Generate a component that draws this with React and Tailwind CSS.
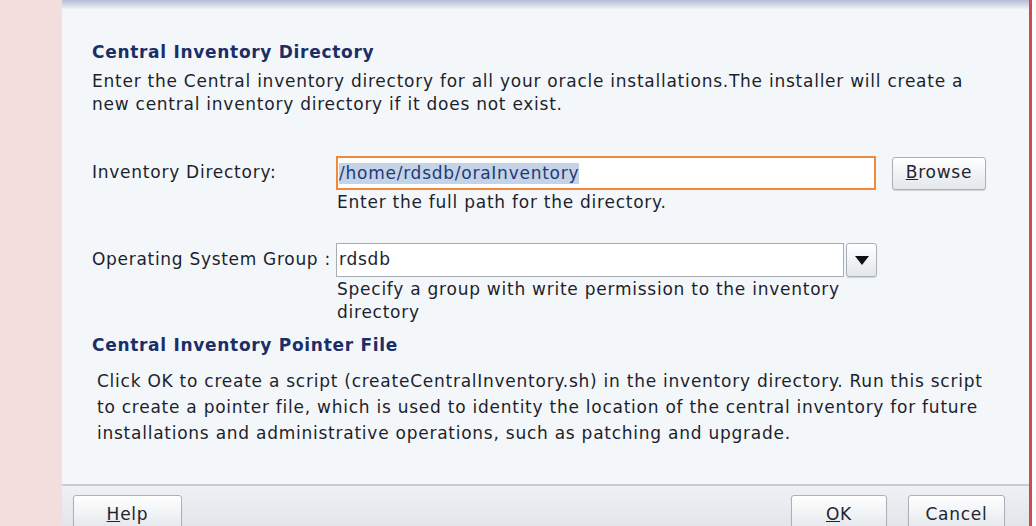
import React from 'react';

const font = { fontFamily: '"DejaVu Sans", Verdana, sans-serif' };

function Btn({ children, className = '' }) {
    return (
        <div
            className={`flex items-center justify-center rounded-[3px] border border-[#a9b0b8] bg-gradient-to-b from-white to-[#e3e7eb] text-[#1e2530] shadow-[0_1px_1px_rgba(0,0,0,0.15)] ${className}`}
        >
            {children}
        </div>
    );
}

export default function App() {
    return (
        <div
            className="flex h-[526px] w-[1036px] overflow-hidden bg-white text-[17px] tracking-[0.75px] text-[#1c1f2e]"
            style={font}
        >
            {/* left page background */}
            <div className="w-[62px] shrink-0 bg-[#f2dedd]" />

            {/* dialog */}
            <div className="flex w-[970px] shrink-0 flex-col border-r-[3px] border-[#cf4a4a] bg-[#f4f7f9]">
                <div className="h-[9px] bg-gradient-to-b from-[#b3bcd5] to-[#eef1f5]" />

                <div className="flex flex-1 flex-col whitespace-nowrap pl-[30px]">
                    <h2 className="mt-[32px] h-[22px] text-[17px] font-bold leading-[22px] tracking-[0.7px] text-[#1b2e68]">
                        Central Inventory Directory
                    </h2>
                    <p className="mt-[7px] leading-[23px]">
                        Enter the Central inventory directory for all your oracle installations.The installer will create a
                        <br />
                        new central inventory directory if it does not exist.
                    </p>

                    {/* inventory directory */}
                    <div className="mt-[40px] flex items-center">
                        <div className="w-[244px]">Inventory Directory:</div>
                        <div className="flex h-[34px] w-[540px] items-center border-2 border-[#f08a3a] bg-white pl-[1px]">
                            <span className="bg-[#c5d3e6] leading-[21px] text-[#1f3a78]">/home/rdsdb/oraInventory</span>
                        </div>
                        <Btn className="ml-[16px] h-[33px] w-[94px]">
                            <span><span className="underline">B</span>rowse</span>
                        </Btn>
                    </div>
                    <div className="ml-[245px] mt-[1px] leading-[23px]">Enter the full path for the directory.</div>

                    {/* os group */}
                    <div className="mt-[29px] flex items-center">
                        <div className="w-[244px] tracking-[0.7px]">Operating System Group :</div>
                        <div className="flex h-[34px] w-[508px] items-center border border-[#a7adb4] bg-white pl-[2px]">
                            rdsdb
                        </div>
                        <Btn className="ml-[2px] h-[34px] w-[31px] rounded-[2px]">
                            <svg width="14" height="9" viewBox="0 0 14 9">
                                <path d="M0 0h14L7 9z" fill="#111" />
                            </svg>
                        </Btn>
                    </div>
                    <p className="ml-[245px] mt-[1px] leading-[23px]">
                        Specify a group with write permission to the inventory
                        <br />
                        directory
                    </p>

                    <h2 className="mt-[10px] h-[22px] text-[17px] font-bold leading-[22px] tracking-[0.7px] text-[#1b2e68]">
                        Central Inventory Pointer File
                    </h2>
                    <p className="ml-[5px] mt-[12px] leading-[26px]">
                        Click OK to create a script (createCentralInventory.sh) in the inventory directory. Run this script
                        <br />
                        to create a pointer file, which is used to identity the location of the central inventory for future
                        <br />
                        installations and administrative operations, such as patching and upgrade.
                    </p>
                </div>

                {/* footer */}
                <div className="h-[42px] shrink-0 border-t-2 border-[#c9cdd2] bg-gradient-to-b from-[#eef1f4] to-[#e2e6ea] pt-[9px]">
                    <div className="flex items-start">
                        <Btn className="ml-[11px] h-[36px] w-[109px] items-start pt-[6px]">
                            <span><span className="underline">H</span>elp</span>
                        </Btn>
                        <div className="flex-1" />
                        <Btn className="h-[36px] w-[96px] items-start pt-[6px]">
                            <span><span className="underline">O</span>K</span>
                        </Btn>
                        <Btn className="ml-[21px] mr-[24px] h-[36px] w-[97px] items-start pt-[6px]">
                            Cancel
                        </Btn>
                    </div>
                </div>
            </div>
        </div>
    );
}
